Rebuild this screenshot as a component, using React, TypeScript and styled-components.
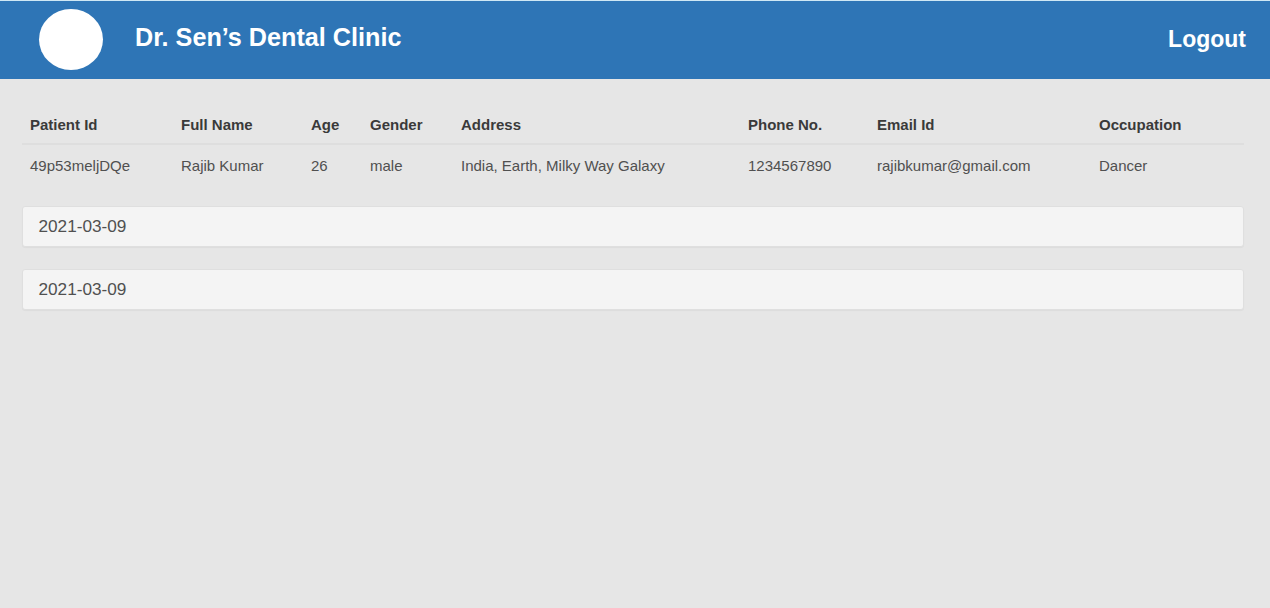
import React from "react";
import styled, { createGlobalStyle } from "styled-components";

const GlobalStyle = createGlobalStyle`
  *, *::before, *::after { box-sizing: border-box; }
  html, body { margin: 0; background: #e6e6e6; }
  body {
    min-height: 100vh;
    font-family: "Liberation Sans", Arial, sans-serif;
    font-size: 15px;
    line-height: 20px;
    color: #505050;
  }
`;

const Header = styled.header`
  display: flex;
  align-items: center;
  height: 79px;
  padding: 0 24px 2px 39px;
  border-top: 1px solid #cfe8f5;
  background: #2e75b6;
  color: #fff;
`;

const Logo = styled.div`
  width: 64px;
  height: 61px;
  margin-right: 32px;
  border-radius: 50%;
  background: #fff;
`;

const Brand = styled.h1`
  margin: 0 auto 4px 0;
  font-size: 25.2px;
  line-height: 30px;
  font-weight: bold;
`;

const Logout = styled.a`
  font-size: 23px;
  line-height: 28px;
  font-weight: bold;
  color: #fff;
`;

const Content = styled.main`
  padding: 25px 26px 0 22px;
`;

const PatientTable = styled.table`
  width: 1222px;
  table-layout: fixed;
  border-collapse: separate;
  border-spacing: 0;
`;

const HeadCell = styled.th<{ $width: number }>`
  width: ${(p) => p.$width}px;
  height: 41px;
  padding: 2px 8px 0;
  border-bottom: 2px solid #dedede;
  text-align: left;
  font-weight: bold;
  color: #3a3a3a;
  white-space: nowrap;
`;

const Cell = styled.td`
  height: 40px;
  padding: 2px 8px 0;
  white-space: nowrap;
`;

const Visits = styled.section`
  display: flex;
  flex-direction: column;
  gap: 22px;
  margin-top: 21px;
`;

const Visit = styled.article`
  height: 41px;
  padding: 0 15.5px;
  border: 1px solid #dfdfdf;
  border-radius: 3px;
  background: #f4f4f4;
  box-shadow: 0 1px 1px rgba(0, 0, 0, 0.04);
  font-size: 17.2px;
  line-height: 39px;
`;

const fields = [
  { label: "Patient Id", value: "49p53meljDQe", width: 151 },
  { label: "Full Name", value: "Rajib Kumar", width: 130 },
  { label: "Age", value: "26", width: 59 },
  { label: "Gender", value: "male", width: 91 },
  { label: "Address", value: "India, Earth, Milky Way Galaxy", width: 287 },
  { label: "Phone No.", value: "1234567890", width: 129 },
  { label: "Email Id", value: "rajibkumar@gmail.com", width: 222 },
  { label: "Occupation", value: "Dancer", width: 153 },
];

const visits = ["2021-03-09", "2021-03-09"];

export default function App() {
  return (
    <>
      <GlobalStyle />
      <Header>
        <Logo />
        <Brand>Dr. Sen’s Dental Clinic</Brand>
        <Logout>Logout</Logout>
      </Header>
      <Content>
        <PatientTable>
          <thead>
            <tr>
              {fields.map((f) => (
                <HeadCell key={f.label} $width={f.width}>{f.label}</HeadCell>
              ))}
            </tr>
          </thead>
          <tbody>
            <tr>
              {fields.map((f) => (
                <Cell key={f.label}>{f.value}</Cell>
              ))}
            </tr>
          </tbody>
        </PatientTable>
        <Visits>
          {visits.map((date, i) => (
            <Visit key={i}>{date}</Visit>
          ))}
        </Visits>
      </Content>
    </>
  );
}
